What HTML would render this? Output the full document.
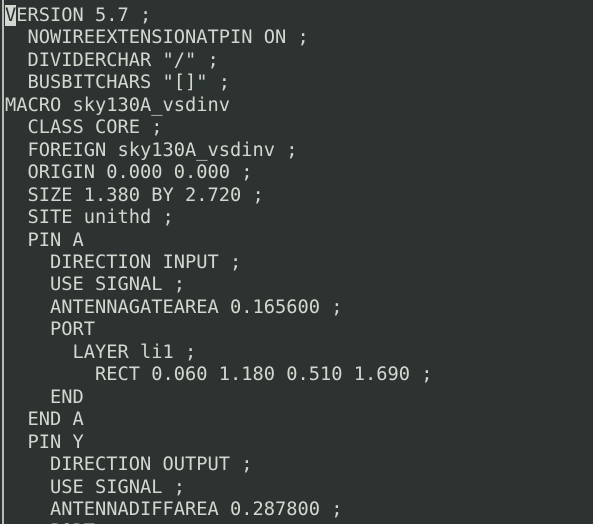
<!DOCTYPE html>
<html><head><meta charset="utf-8"><style>
html,body{margin:0;padding:0;background:#2c3331;width:593px;height:524px;overflow:hidden}
.w{position:fixed;left:0;top:0;width:593px;height:524px;overflow:hidden;background:#2c3331}
.b{position:absolute;left:2px;top:0;width:2px;height:524px;background:#b8bcb8}
pre{position:absolute;left:5px;top:5px;margin:0;font-family:"DejaVu Sans Mono","Liberation Mono",monospace;font-size:18.7px;line-height:22.45px;color:#d3d7cf}
.c{background:#d3d7cf;color:#2c3331}
</style></head><body><div class="w"><div class="b"></div><pre><span class="c">V</span>ERSION 5.7 ;
  NOWIREEXTENSIONATPIN ON ;
  DIVIDERCHAR "/" ;
  BUSBITCHARS "[]" ;
MACRO sky130A_vsdinv
  CLASS CORE ;
  FOREIGN sky130A_vsdinv ;
  ORIGIN 0.000 0.000 ;
  SIZE 1.380 BY 2.720 ;
  SITE unithd ;
  PIN A
    DIRECTION INPUT ;
    USE SIGNAL ;
    ANTENNAGATEAREA 0.165600 ;
    PORT
      LAYER li1 ;
        RECT 0.060 1.180 0.510 1.690 ;
    END
  END A
  PIN Y
    DIRECTION OUTPUT ;
    USE SIGNAL ;
    ANTENNADIFFAREA 0.287800 ;
    PORT</pre></div></body></html>
